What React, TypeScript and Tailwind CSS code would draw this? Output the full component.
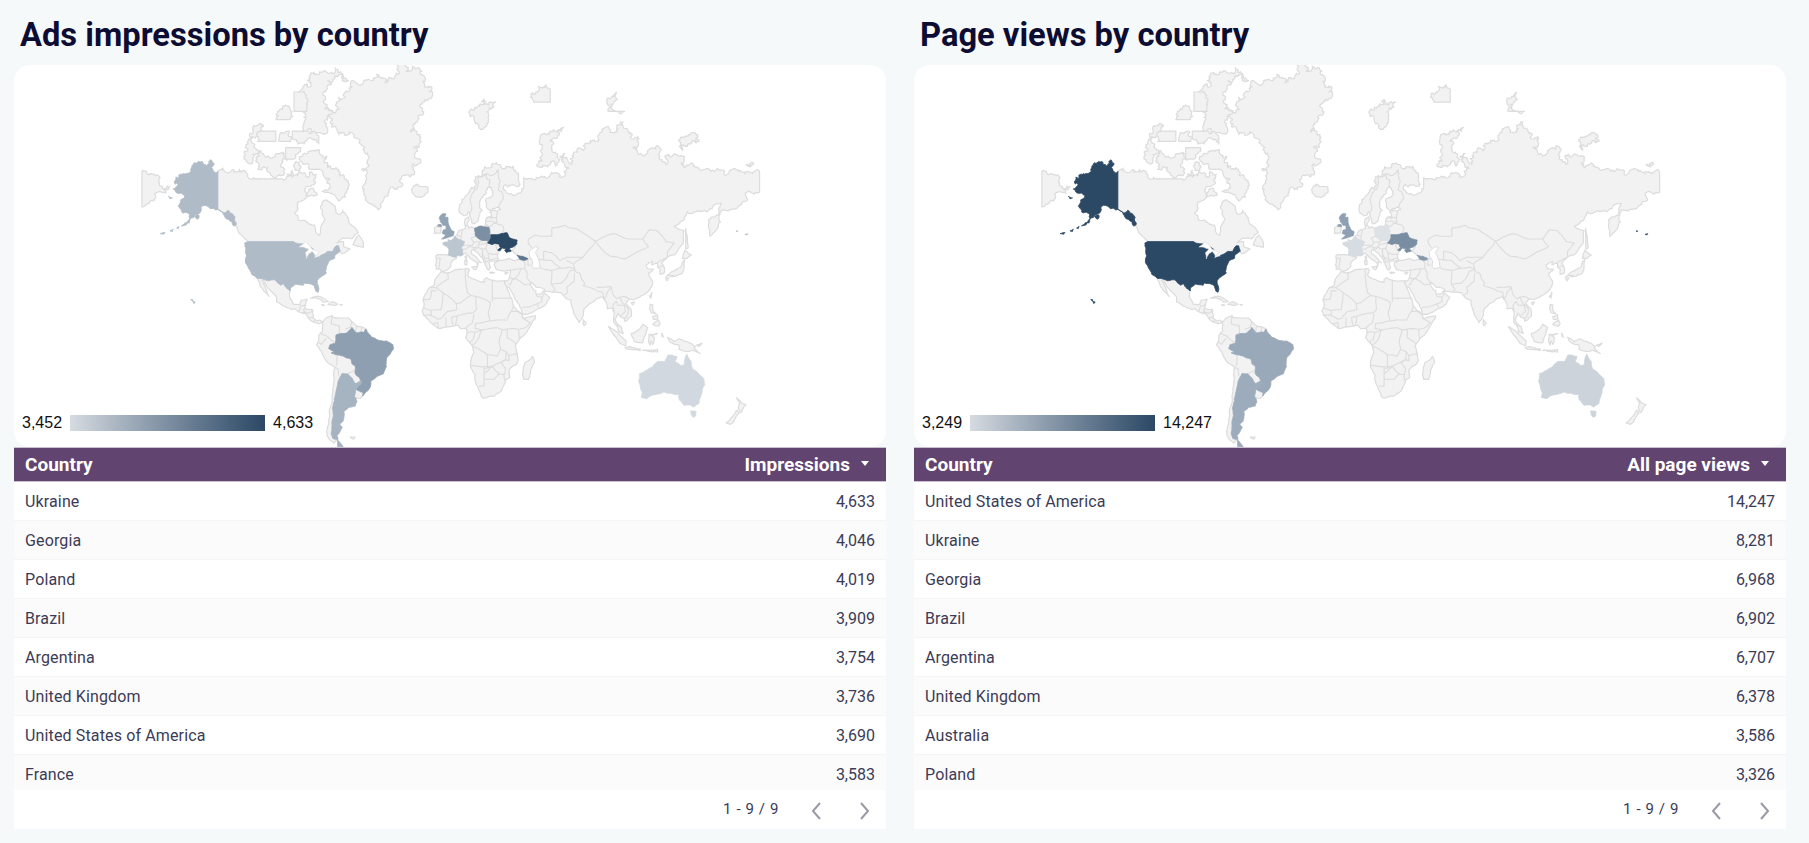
type Pt = [number, number];

const sx = (lon: number) => 437 + 1.653 * lon;
const sy = (lat: number) => 271 - 96 * Math.log(Math.tan(Math.PI / 4 + (lat * Math.PI) / 360));

const noise = (a: number, b: number) => {
  const s = Math.sin(a * 12.9898 + b * 78.233) * 43758.5453;
  return s - Math.floor(s) - 0.5;
};

// midpoint displacement, keyed on the segment so that neighbours sharing an edge get the same line
function wiggle(a: Pt, b: Pt, amp: number, out: Pt[]) {
  const [p, q] = a[0] < b[0] || (a[0] === b[0] && a[1] < b[1]) ? [a, b] : [b, a];
  const dx = q[0] - p[0];
  const dy = q[1] - p[1];
  const len = Math.hypot(dx, dy);
  if (len < 2) return;
  const midY = (p[1] + q[1]) / 2;
  const rough = midY < 125 ? amp * 5.5 : midY < 160 ? amp * 3 : amp;
  const off = noise(p[0] + q[0], p[1] + q[1]) * rough;
  const m: Pt = [(p[0] + q[0]) / 2 - dy * off, (p[1] + q[1]) / 2 + dx * off];
  wiggle(a, m, amp, out);
  out.push(m);
  wiggle(m, b, amp, out);
}

// "lon,lat lon,lat ..." -> svg path
const toPath = (src: string, closed = true, amp = 0.16) => {
  const raw = src
    .trim()
    .split(/\s+/)
    .map((p) => p.split(',').map(Number));
  const out: Pt[] = [];
  const n = raw.length;
  for (let i = 0; i < (closed ? n : n - 1); i++) {
    const [lon1, lat1] = raw[i];
    const [lon2, lat2] = raw[(i + 1) % n];
    const a: Pt = [sx(lon1), sy(lat1)];
    const b: Pt = [sx(lon2), sy(lat2)];
    out.push(a);
    // straight lines stay straight (49th parallel, Alaska border, map edge)
    if (lon1 !== lon2 && lat1 !== lat2) wiggle(a, b, amp, out);
  }
  if (!closed) out.push([sx(raw[n - 1][0]), sy(raw[n - 1][1])]);
  return out.map((p, i) => `${i ? 'L' : 'M'}${p[0].toFixed(1)} ${p[1].toFixed(1)}`).join('') + (closed ? 'Z' : '');
};

const LAND = [
  // Eurasia
  '-5.6,36 -6.4,36.8 -7.4,37.2 -8.9,37 -8.8,38.5 -9.5,38.8 -8.8,40.5 -8.9,42 -9.2,43 -8,43.7 -5.5,43.6 -1.8,43.4 -1.2,44.7 -1.1,46 -2.2,47 -4.7,47.9 -4.7,48.5 -3,48.8 -1.6,48.7 -1.7,49.7 -0.2,49.3 1.5,50.1 2.5,51 3.6,51.5 4.7,53 6.9,53.5 8.7,53.9 8.6,55 8.1,56 8.6,57.1 10.6,57.7 10.3,56 10,55 11,54 12.5,54.4 14.2,53.9 16.5,54.5 18.6,54.7 19.8,54.4 21,55.3 21,57 22.5,57.7 24.3,57.2 24.4,58.3 23.5,59.2 28,59.5 30,60 28.5,60.6 25,60.2 22.9,59.9 21.4,60.8 21.4,62 21.2,63 25.4,65.1 24.5,65.8 22,65.5 21.2,64.5 17.5,62.5 17.2,60.7 19,59.8 16.7,57.5 16,56.2 14.3,55.5 12.9,55.5 11.2,59 10.7,59.4 8.3,58.1 5.6,58.8 5,61 6.5,62.8 10.5,64.5 14,67.5 19,69.8 25.8,71.1 31,70.2 41,67.5 40,66.2 33,66.7 35,64.4 37.5,64 40.5,64.6 44,66 44,68.3 54,68.4 60,69 68,68.5 67,71.5 69,73 73,71 74,73 80,73.5 87,75 104,77.7 113,75.7 110,74 127,73.5 130,71 140,72.5 160,69.7 170,70 178,69 186.7,69.5 186.7,64.8 180,65 178,64.5 179,62.5 170,60 163.5,59.8 162,58 163,56 160,53 156.7,51 155.7,55 156,57 163.5,61.8 160,61.5 155,59.4 143,59.3 135,54.7 141,53 140.3,48 135,43.5 132,43 130.7,42.3 127.5,39.8 129.3,37 129,35.2 126.5,34.5 126.6,37 125,38 125,39.8 121.5,39 122,40.6 118,39 119,37.3 122.5,37 119.5,35 122,31 121.5,28.5 119,25.5 114,22.5 110.5,21.3 108,21.6 105.8,19 108.8,15.8 109.3,12 105.2,8.7 105,10.5 103,11 101,13.4 99.3,10 100.3,7.5 103,5.5 104.2,1.5 101.3,2.9 100.3,6 98.3,8.5 98.7,14 97.6,16.5 94.5,16 94.3,18.5 91.5,22.8 88,21.7 86.5,20 80.3,15.5 80,12 77.5,8 75,12 73,17.5 72.7,21 69,22.3 66.8,25 61.6,25.2 57.3,25.7 56.5,27 51.5,27.9 48.8,30.3 48,29.5 50.1,26.5 51.3,26 51.5,24.3 54,24.2 56.3,26.2 56.6,24.5 59.8,22.5 57.8,19 55,17 52,15.8 45,12.8 43.3,12.7 42.8,15 39,21 35,28 34.5,28 33,28.5 32.5,30 32.3,31.2 34.3,31.3 35.8,34.5 36,36.8 32.5,36.1 30.5,36.3 27.5,36.8 26.2,38.8 26.3,40 29,41 31.3,41.2 35,42 38,41 41.5,41.6 41.6,42.5 38,44.5 37,45.3 39,47.2 35,46.2 36.5,45.2 33.6,44.5 32.5,45.4 33.5,46.1 30.8,46.5 28.7,44.8 28,43 29,41.2 26.5,40.8 24,40.7 23,40.3 24,38 22.8,36.5 21.5,37.5 19.5,41.5 18.5,42.5 14.5,45.2 13.7,45.7 12.3,45.3 12.5,44 16,41.9 18.4,40 16.9,40.5 16,38 15.7,40 12.5,41.5 10.5,43 8.8,44.4 6,43.1 3.2,43 3.2,41.9 0.7,40.8 -0.3,39.4 0,38.7 -2,36.8',
  // Chukotka, wrapped to the left edge
  '-187,69.6 -177,67.5 -170,66.2 -172.5,64.5 -176,65 -180,62.5 -187,60.8',
  // Africa
  '32.5,30 32.3,31.2 30,31.2 25,31.6 21.5,32.9 20,32 20,30.5 15.5,31.5 11,33.2 10,34 11,37 9.8,37.3 3,36.8 -2,35.2 -5.4,35.9 -6,35.7 -9.7,31.5 -10,29 -13,27.8 -16,23.5 -17,21 -16.3,19 -17.5,14.7 -16.7,12.4 -13.5,9.5 -11,7 -7.5,4.4 -4,5.2 1,5.8 4.4,6.3 6,4.3 8.8,4.6 9.7,3.5 9.3,0 8.8,-1 11.8,-4.5 13.2,-6 13.8,-10 11.8,-16 11.7,-18 14.5,-22.5 15,-27 18.4,-33.9 20,-34.8 26,-33.8 30.5,-31 32.8,-27 32.8,-25.8 35.5,-24 35,-20 39,-17 40.7,-14.5 39.5,-8 38.8,-6 39.5,-4.5 41.5,-1.7 46,2.5 51,10.5 51.2,11.9 44,10.5 43.2,11.5 42.9,12.8 39.5,15.5 37.3,18.9 37,21 35.5,24 33.9,27.5',
  // North America
  '-168,65.6 -166.5,68.3 -163,69 -156.7,70.7 -141,69.6 -135,69.3 -128,70 -124,69.6 -115,68 -108,68 -102,68 -96,68.3 -94,71.5 -92,69.5 -88,68.5 -85.5,69.5 -81.5,69 -82,67 -86,66.2 -87.5,64.5 -93,62 -94.7,59 -92.5,57 -88,56.5 -82.5,55 -82,52.9 -79.5,51.3 -79,54 -77,56 -78,58.8 -77.5,62.4 -73.5,62.3 -70,61 -68.5,58.6 -65.5,59.8 -62,57.5 -60,55 -56,52.5 -60,50 -66,50.2 -69,48.5 -65,49 -65,47 -61,46 -64,44.5 -66,44 -67.5,44.9 -70,43.7 -70.5,42 -74,40.6 -75.5,38 -76,36 -75.5,35.2 -78,33.8 -81,31.5 -80,27 -80.5,25.2 -81.8,26 -83,29 -85,29.7 -89,30.2 -89.5,29 -94,29.6 -97.2,27.5 -97.5,22 -95.5,18.7 -91.5,18.5 -90.5,21 -87,21.5 -88,18 -88.6,16 -84,15.8 -83.3,12 -83.5,10.5 -81,8.9 -79.5,9.5 -77.4,8.6 -78.3,8 -80.5,7.3 -83,8.2 -85.7,10 -87.5,13 -91.5,14 -94.5,16.2 -96.5,15.7 -101.5,17.5 -105.5,20 -105.5,22.5 -109.5,26.5 -112.5,30 -113.2,31.5 -114.7,31.7 -112,27 -110,23 -112,25 -115,28 -117.1,32.5 -120.5,34.5 -122.5,37.5 -124.4,40.4 -124,46 -124.7,48.4 -122.5,48.5 -125,50.3 -128,52 -130.3,54.7 -133.5,57.5 -138,59 -140,59.8 -146,60.5 -151,61 -152,59 -154,58.5 -158.5,55.8 -163,54.8 -158,58.7 -162,59 -165,61 -161,64 -165,64.5',
  // South America
  '-77.4,8.6 -75.5,10.8 -72,12.2 -71.3,11 -68,10.7 -62,10.7 -60,8.5 -57,6 -52.5,4.8 -51,4 -50,1.5 -48,-0.7 -44,-2.5 -39,-3 -35.2,-5.2 -34.8,-7.5 -37,-11 -39,-13 -39.2,-18 -41,-22 -45,-23.5 -48.5,-26 -48.7,-28.5 -52,-32.2 -53.4,-33.7 -55,-34.9 -58.4,-34 -57,-36.5 -58,-38.5 -62,-39 -65,-41 -65.2,-45 -67.5,-46.5 -65.8,-47.8 -69,-51 -68.4,-52.4 -71,-53.7 -75,-51 -74,-45 -73.5,-40 -71.5,-32 -70.3,-18.5 -76,-14 -81.3,-5 -80,-2.5 -80,0.5 -78,2.5 -77.5,6.8 -77.9,7.5',
  // Greenland and the arctic islands
  '-73,78.2 -68,76 -58,75.5 -54,70 -51,69 -53.5,66 -50,62 -44,59.9 -41,62.5 -37,65.7 -30,68 -23,70 -22,72.5 -18,75 -20,78 -17,80 -12,81.5 -30,83.6 -45,82.5 -60,82 -68,80.5',
  '-61.5,66.5 -64,63.5 -68,62.5 -73,64.5 -78,65 -73,68 -79,70 -85,70 -89,71 -85,73.5 -80,73.7 -75,72.5 -68,70 -62,67',
  '-117,70 -105,68.7 -101,69.5 -105,73 -115,73.5 -118,71.5',
  '-125,72 -120,71.5 -116,73.5 -118,76 -124,74.5',
  '-90,76.5 -80,76.3 -76,78 -72,79 -62,82 -70,83 -85,82.5 -92,81 -88,78',
  '-96,75.5 -80,74.6 -80,75.8 -90,76.5 -96,76.5',
  '-100,72 -95,72 -91,74 -100,74',
  '-117,75 -106,75 -106,76.5 -116,76.5',
  '-95,79 -87,79 -90,81 -95,81',
  '-122,76 -118,75.7 -116,77.5 -120,77',
  '-104,75 -97,75 -98,76.5 -103,76.3',
  '-106,78 -98,78 -100,79.7 -105,79',
  '-99,69 -95,68.7 -96,69.8',
  '-87,63.7 -81,64 -83,65.5 -86,65.6',
  '-59.3,47.7 -53,46.7 -53,48.5 -55.7,51.5 -57.5,50.5',
  // North Atlantic and Europe
  '-24,65.5 -22,64 -18.5,63.4 -14,64.7 -15,66.2 -19,66.2 -22.5,66.4',
  '-10,52 -6.2,52.2 -6,54 -5.6,55 -8,55.2 -10,54',
  '12.5,38 15.6,38.2 15,36.7',
  '8.2,41 9.7,41 9.7,39.2 8.5,39',
  '8.6,43 9.5,43 9.4,41.5 8.8,41.6',
  '23.5,35.5 26.3,35.3 24,35',
  '32.3,35 34.5,35.6 33.5,34.6',
  // Russian arctic
  '11,79 20,80.3 27,80 18,76.7 15,77.5',
  '52,71 57,70.7 60,75 68,77 60,76.5 55,74.5',
  '48,80.5 60,81 60,80 50,80',
  '95,79 105,79 100,81',
  '138,75 145,76 150,75 140,73.5',
  '178.5,71 183,71.2 181,70.8',
  '142,54 143,50 143.5,46.5 142,46 142,50',
  // Caribbean
  '-85,22 -80,23 -75,20.5 -74.2,20.2 -77.5,19.9 -78,20.8 -82,22.3',
  '-74.5,18.4 -72,20 -68.5,18.6 -71,18',
  '-78.3,18.4 -76.3,18.2 -77.5,17.8',
  '-67.2,18.4 -65.7,18.4 -66.5,18',
  // Asia and Oceania
  '130.9,34 135,33.5 140,35 141,38 141.4,41.4 140,40.5 139,38 136.7,37 133,35.5',
  '140,42 141.5,45.5 145.3,43.4 143,42',
  '130,33.5 131.8,33 131,31.2 130,32',
  '132.5,33.7 134.5,34 134,33.3',
  '121.5,25.2 121,22 120,23',
  '109,19.5 111,19.8 110,18.3',
  '120.5,18.5 122.2,18.2 122,15.5 124,13 121,13.7 120,16',
  '122,7 125.5,9.5 126.5,7.5 125.5,5.8',
  '122,11.5 125,12.5 125,10 122.5,9.8',
  '109,1.5 111,2 113,3.2 116,7 119,5 117.8,1 116,-4 111,-3.3 109.3,0',
  '95.3,5.6 98,4 104,-1 106,-3 105.5,-5.8 102,-4 98.5,0.5',
  '105.2,-6.8 108,-6.3 114.5,-7.7 114.4,-8.7 106,-7.5',
  '119.8,1 125,1.5 121,0.3 123.2,-1 122,-5 121,-3 120.5,-5.5 119.5,-3.5',
  '131,-0.8 135,-3.3 138,-1.7 145,-4.3 147.8,-6 147,-7 150.8,-10.5 146,-8.5 143,-9.2 138,-8 138,-5.5 133,-4',
  '116,-8.5 120,-8.3 125,-8 125,-9.5 119,-9',
  '127.5,1.8 128.5,-0.8 127.5,0',
  '148.5,-5.5 152,-4.2 150,-6.2',
  '172.8,-34.5 175.5,-37 178.4,-37.7 175.3,-41.5 173.8,-39.5 174.7,-37',
  '172.7,-40.5 174.3,-41.7 171,-45.5 169,-46.6 166.5,-46',
  '49.3,-12 50.5,-15.5 47,-25 44,-25 43.5,-21 44.5,-16',
  '80,9.7 81.8,7.5 80.5,6 79.8,7.5',
  '-61,-51.5 -58,-51.5 -59,-52.3',
];

// inland water drawn on top of the land
const CASPIAN = '47,45 51,47 53,46.5 51,44.5 53,41.5 54,38 50,37.3 49,38.5 49.5,40.3 47.5,43';
const GREAT_LAKES = '-92,46.8 -88,48.8 -84.8,46.7 -84,45.9 -80,44.5 -82,43 -84,45 -86,44 -87.5,41.7 -88,44.5 -86,46 -89,46.7';

const BORDERS = [
  // Central America
  '-92,14.6 -91,17.8 -89,17.8 -88.3,18.5', '-89,15.9 -89.2,15 -88,14', '-90,13.7 -88,14 -86,13.5 -83.2,15', '-85.7,11 -83.6,11', '-82.9,8.2 -82.5,9.5',
  // South America
  '-72,12 -72.5,7.4 -67.5,6 -67.5,2 -69.5,0.6', '-60,8.5 -61,5.2 -64,4', '-57.2,6 -57.5,2', '-54,5.8 -54.5,2.3', '-78.8,1.4 -75.2,0 -70,-4.3', '-80.3,-3.4 -78.5,-5 -75.5,-1.5', '-69,-11 -69,-16 -69.6,-17.5', '-70.3,-18.5 -68.5,-19 -68,-23', '-62.5,-22 -58,-20',
  // Europe
  '-8.9,42 -6.5,42 -7,39.5 -7.4,37.2', '8.6,55 10,54.8', '3.4,51.4 6,51', '6.9,53.5 6,51 6.2,49.5', '14.2,53.9 14.7,52.5 15,51 12.2,50.3 13.8,48.7 13,47.5 9.6,47.5 7.5,47.6', '7,45.9 9,46 10.4,46.8 12.2,47 13.7,46.5 13.7,45.7', '13.8,48.7 17,48.8 17,47.8 16.2,46.8 13.7,46.5', '15,51 18.8,49.5 17,48.8', '17,47.8 18.8,48 22.2,48.4 21,46.3', '16.2,46.8 18.8,45.9 21,46.3 22.5,44.3 25,43.7 28.5,43.8', '26.6,48.3 28.2,45.5', '22.5,44.3 22.7,42.9 23,41.3 26.3,41.8 28,42', '20.5,40 23,41.3', '19,45.9 19.3,43.5 20.5,42 22.7,42.2', '13.7,45.5 16.2,46.5', '19,45 19,42.5', '19.5,42 20.5,42 20.8,40.2',
  '21,56.3 25,56.3 26.5,55.7 23,54.3', '21.5,57.5 24.3,57.8 27.5,57.5 28,56 26.5,55.7 31,55 32,53.5 31,52.1', '11.2,59 12.5,61 12,63.5 14.5,65.5 18,68.5 20.5,69', '24.2,65.8 23.5,67.8 20.5,69 25.7,68.9 28.5,69.9 29,66.8 31.5,62.9 27.8,60.5', '28,59.5 27.5,57.5', '19.8,54.4 22.8,54.4 21,55.3',
  // Middle East and Central Asia
  '41.5,41.6 43.5,41 44.8,39.7 44.5,37.2 42.2,37.2 36.7,36.6', '42.2,37.2 41,34.5 39,32.5 36.8,32.3 35.8,33', '39,32.5 44.5,29.2 48,29.5', '39,32.5 37,31.6 36,29.3 34.9,29.5', '44.8,37.2 46,35.5 46,33 48.5,30', '43,16.7 47,17 52,19 55,20 55,22.7 52,23 51.5,24.3', '52,19 53,16.7', '56,24.5 55.5,22.7', '46.5,41.8 48.5,41.8', '43.5,41 46.5,41.5 46.5,38.9 48,39',
  '54,37.5 61,36.5 61,35 60.7,31 60.7,29.5 63,27 61.6,25.2', '60.7,29.5 66.5,29.9 70,33 71.6,36 74.8,37', '61,36.5 65,37.3 71,37.9 74.8,37.3', '53,41.5 56,41.3 61,41 66.5,37.3', '56,41.3 56,45 61,44.5 66,41 70,42.5 80,42.5', '73.5,39.5 70,41', '49,46.4 47,48 46.5,49 47,50 51,51.5 55,51 61,51 61,54 69,55 71,54.2 77,53.5 83,51 87.3,49.2', '87.3,49.2 85.5,47 82.5,45 80,42.5 74,39.5 74.8,37.3 75,35.9 78,35 79,32 81,30',
  // South and East Asia
  '81,30 80,28.8 88,26.3', '88,28 92,27.9 97,28.3', '88,26 92,25 92.5,21', '97,28 94,24 92.5,21', '74.8,35 74.5,31 70,28 70.5,25 68.3,23.6', '97,28 98,24 100,22', '100,21.5 102,22.5 105,23 108,21.6', '102,22.5 104,19 107,16.5 107.5,14.5', '100,20.3 101,18 105,18 105.5,14.4 102.8,12', '107.5,14.5 106,11 104.5,10.4', '100,20.3 98,18 98.7,14', '100.3,6.5 102,6',
  '87.3,49.2 91,46 96,43 105,41.7 112,44.5 119.5,47 116,50', '87.3,49.2 92,50.7 98,52 102,51.3 107,50 116,50 120,53.4 125,53 130,49 135,48.4 131,45 131,43 130.7,42.3 128,41.5 124.5,40', '125,38 128.5,38.5',
  // Africa
  '-2,35.2 -1.5,32.3 -8.7,28 -8.7,27.3', '-13,27.7 -8.7,27.7', '-8.7,26 -12,26 -12,23.4 -13,21.3 -17,21', '-8.7,27.3 -4.8,25 -6,15.5 -12,15 -16.3,16.5', '-4.8,25 1.2,21 3.2,19 6,19.5 12,23.5', '8.6,36.9 9,30 10,25 12,23.5 15,23 24,19.5', '25,31.6 25,20', '25,22 37,22', '24,19.5 22.5,14 23.5,9', '15,23 15.5,16 13.5,13.7', '3.5,11.7 8,13 13.5,13.7', '3.2,19 3.5,15.5 0.2,14.8 -2,14.5 -5.5,10.5', '0.2,11 3.5,11.7', '14,13 13,8 8.8,4.6', '-3,5 -3,11', '1.2,6 0.5,11', '2.7,6.3 3.5,11.7', '-7.5,4.4 -8,8 -11,7', '-13,12.5 -8,10 -5.5,10.5', '-12,15 -12,12.5 -16.7,12.4',
  '23.5,9 28,9.5 34,9.5', '36.5,14.5 34,10', '36.5,14.5 38,18', '43,12.7 40,14.5 36.5,14.5', '43,11 48,8 45,5 41.5,4', '41.5,-1.7 41,4 36,4.5 34,4.2 34,-1 37.5,-3 39.5,-4.7', '34,4.2 31,3.7 28,5', '15,7.5 14.5,4.5 18.5,3.5 23,4.5 28,5', '15,7.5 23.5,9', '9.7,2.3 14.5,2.2 18.5,3.5 17,-1 14,-4.8 12,-5', '14.5,2.2 13.5,-2 11,-3.8', '31,3.7 29.5,-1 29,-4 30,-8', '12.5,-6 16.5,-7.5 22,-11 28,-12 30,-8', '22,-11 22,-18 11.8,-17.3', '22,-18 25,-17.8 20,-19 20,-28.5 17,-28.8', '25,-17.8 30,-15.7 33,-14 33.5,-9.5 30,-8', '33.5,-9.5 34.9,-11.5 40.4,-10.5', '34.9,-11.5 35,-14.5 33,-14 30.3,-15.5 33,-19 32,-23 32.8,-26', '20,-22 25,-17.8 29,-22 26,-25 20,-25', '29,-22 32,-22.4',
];

// highlighted countries, key -> outlines
const SHAPES: Record<string, string[]> = {
  usa: [
    '-124.7,48.4 -123,49 -95.2,49 -94.6,48.7 -89.5,48 -84.8,46.7 -82.5,45.3 -82.4,43 -83,42 -79,42.7 -79,43.3 -76.5,44 -74.7,45 -71.5,45 -69.5,47.3 -68,47.3 -67,45 -67.5,44.9 -70,43.7 -70.5,42 -74,40.6 -75.5,38 -76,36 -75.5,35.2 -78,33.8 -81,31.5 -80,27 -80.5,25.2 -81.8,26 -83,29 -85,29.7 -89,30.2 -89.5,29 -94,29.6 -97.2,27.5 -97.2,25.9 -99.5,27.5 -101.5,29.8 -103,29 -104.7,30 -106.5,31.8 -108.2,31.8 -111,31.3 -114.7,32.5 -117.1,32.5 -120.5,34.5 -122.5,37.5 -124.4,40.4 -124,46',
    '-168,65.6 -166.5,68.3 -163,69 -156.7,70.7 -141,69.6 -141,60.3 -137.5,58.9 -135,59.8 -131,56.6 -129.8,55.3 -131.5,54.7 -134.5,56.8 -138,59 -140,59.8 -146,60.5 -151,61 -152,59 -154,58.5 -158.5,55.8 -163,54.8 -158,58.7 -162,59 -165,61 -161,64 -165,64.5',
    '-171,63.7 -168.5,63.3 -170,63',
    '-155,57.9 -152.5,58.3 -153.5,57',
    '-166,54 -164.5,54.6 -165,53.8',
    '-170,53 -168,53.6 -168.5,52.8',
    '-176,52 -173,52.4 -174,51.8',
    '178,51.8 179.5,52 179,51.5',
    '172.5,53 173.5,53 173,52.7',
    '-156.3,20.3 -154.8,19.8 -155.6,18.9',
    '-157.4,21.4 -156,21 -156.6,20.5',
  ],
  ukraine: ['22.2,48.4 22.7,49.1 23.7,50.5 24,51.6 28,51.6 31,52.1 34,52.3 35.5,50.4 38,49.9 40,49.6 39.8,48 38.2,47.1 35,46.2 36.5,45.2 33.6,44.5 32.5,45.4 33.5,46.1 30.8,46.5 29.7,45.3 28.2,45.5 30,46.5 29,48 26.6,48.3 24.9,47.8'],
  georgia: ['40,43.4 43.5,42.9 46.5,41.8 45,41.2 43,41.3 41.5,41.6'],
  poland: ['14.2,53.9 16.5,54.5 18.6,54.7 19.8,54.4 23,54.3 23.6,52.6 23.7,50.5 22.7,49.1 19,49.4 15,51 14.7,52.5'],
  france: ['-1.8,43.4 -1.2,44.7 -1.1,46 -2.2,47 -4.7,47.9 -4.7,48.5 -3,48.8 -1.6,48.7 -1.7,49.7 -0.2,49.3 1.5,50.1 2.5,51 4.2,50 6.2,49.5 8.2,49 7.5,47.6 6,46.3 7,45.9 7,44.1 7.5,43.8 6,43.1 3.2,43 3.2,42.4 0.7,42.7'],
  uk: [
    '-5.7,50 -1,50.7 1.4,51.2 1.8,52.8 0.2,53.3 -1.3,55 -1.8,56 -1.8,57.6 -3.8,57.7 -3,58.7 -5.2,58.7 -7,57.5 -6.3,56 -4.9,55 -3,54.9 -3,53.4 -4.7,53.3 -5.2,52 -3,51.4',
    '-8,54.5 -5.6,54.5 -6,55.2 -7.5,55.2',
  ],
  brazil: ['-51.6,4.2 -50,1.5 -48,-0.7 -44,-2.5 -39,-3 -35.2,-5.2 -34.8,-7.5 -37,-11 -39,-13 -39.2,-18 -41,-22 -45,-23.5 -48.5,-26 -48.7,-28.5 -52,-32.2 -53.4,-33.7 -53.2,-32 -57.6,-30.2 -54,-27 -54.6,-25.6 -55.5,-24 -58,-22 -57.8,-18 -60,-16.3 -60.5,-13.7 -65.4,-11.8 -69.5,-11 -72.5,-10 -70.5,-9.5 -74,-7.5 -73,-5 -70,-4.3 -69.5,0.6 -67,1.5 -64,1.5 -60,5.2 -57.5,1.9 -54.5,2.3 -52.5,2.2'],
  argentina: [
    '-66,-21.9 -62.5,-22 -58,-27.3 -54.6,-25.6 -54,-27 -57.6,-30.2 -58.4,-34 -57,-36.5 -58,-38.5 -62,-39 -65,-41 -65.2,-45 -67.5,-46.5 -65.8,-47.8 -69,-51 -68.4,-52.4 -71.5,-52 -72.5,-50 -71.5,-44 -71.8,-39.5 -70.5,-36 -70,-33 -68.5,-27 -66.5,-23',
    '-68.6,-52.6 -65.2,-54.9 -68.6,-54.9',
  ],
  australia: [
    '114,-22 113.5,-26 115.7,-32 115,-34.4 118,-35 124,-33 129,-31.6 134,-32.6 137.7,-33 138,-35.5 141,-38.2 144.8,-38 147,-39 150,-37.3 151.3,-33.5 153.5,-28 153,-25 149,-21 146,-19 145.3,-15 142.6,-10.8 141.6,-13 141,-17 139,-17.5 135.5,-15 136.8,-12.2 131,-11.5 129.5,-15 125,-15 122,-18 117,-20.6',
    '144.7,-40.8 148.3,-41 148,-43 146.5,-43.6 145.4,-42.5',
  ],
};

type Panel = {
  title: string;
  metric: string;
  min: string;
  max: string;
  barWidth: string;
  colors: Record<string, string>;
  rows: [string, string][];
};

const PANELS: Panel[] = [
  {
    title: 'Ads impressions by country',
    metric: 'Impressions',
    min: '3,452',
    max: '4,633',
    barWidth: 'w-[195px]',
    colors: { usa: '#afbbc7', ukraine: '#2b4865', georgia: '#5c748d', poland: '#7c8fa3', france: '#bcc6d1', uk: '#92a3b5', brazil: '#8e9fb1', argentina: '#a6b3c1', australia: '#d2d8df' },
    rows: [
      ['Ukraine', '4,633'],
      ['Georgia', '4,046'],
      ['Poland', '4,019'],
      ['Brazil', '3,909'],
      ['Argentina', '3,754'],
      ['United Kingdom', '3,736'],
      ['United States of America', '3,690'],
      ['France', '3,583'],
    ],
  },
  {
    title: 'Page views by country',
    metric: 'All page views',
    min: '3,249',
    max: '14,247',
    barWidth: 'w-[185px]',
    colors: { usa: '#2b4865', ukraine: '#7a8ea3', georgia: '#8497ab', poland: '#dde2e7', france: '#d6dce2', uk: '#8ea0b2', brazil: '#9aa9b9', argentina: '#9dacbc', australia: '#ccd3da' },
    rows: [
      ['United States of America', '14,247'],
      ['Ukraine', '8,281'],
      ['Georgia', '6,968'],
      ['Brazil', '6,902'],
      ['Argentina', '6,707'],
      ['United Kingdom', '6,378'],
      ['Australia', '3,586'],
      ['Poland', '3,326'],
    ],
  },
];

function WorldMap({ colors }: { colors: Record<string, string> }) {
  return (
    <svg width="872" height="382" viewBox="0 0 872 382" className="block" strokeLinejoin="round">
      <g fill="#f2f2f2" stroke="#dcdcdc" strokeWidth="1.2">
        {LAND.map((p, i) => (
          <path key={i} d={toPath(p)} />
        ))}
      </g>
      <g fill="none" stroke="#dcdcdc" strokeWidth="1.1">
        {BORDERS.map((p, i) => (
          <path key={i} d={toPath(p, false, 0.1)} />
        ))}
      </g>
      <path d={toPath(CASPIAN)} fill="#ffffff" stroke="#dcdcdc" />
      {Object.entries(SHAPES).map(([key, outlines]) => (
        <g key={key} fill={colors[key]} stroke={colors[key]} strokeWidth="0.8">
          {outlines.map((p, i) => (
            <path key={i} d={toPath(p)} />
          ))}
        </g>
      ))}
      <path d={toPath(GREAT_LAKES)} fill="#ffffff" stroke="#dcdcdc" strokeWidth="0.6" />
    </svg>
  );
}

function Chevron({ left }: { left?: boolean }) {
  return (
    <svg width="10" height="18" viewBox="0 0 10 18" fill="none" stroke="#9a9aa6" strokeWidth="2">
      <path d={left ? 'M9 1 2 9l7 8' : 'M1 1l7 8-7 8'} />
    </svg>
  );
}

function CountryPanel({ panel }: { panel: Panel }) {
  return (
    <div className="w-[872px] shrink-0">
      <h2 className="h-[65px] pl-1.5 pt-[13px] text-[32.7px] leading-[44px] font-bold text-[#0d0d33]">{panel.title}</h2>

      <div className="relative h-[382px] overflow-hidden rounded-2xl bg-white">
        <WorldMap colors={panel.colors} />
        {/* Colour scale */}
        <div className="absolute left-2 top-[350px] flex h-4 items-center font-['Liberation_Sans',sans-serif] text-base text-[#111111]">
          <span>{panel.min}</span>
          <div className={`mx-2 h-4 ${panel.barWidth} bg-gradient-to-r from-[#d6dbe1] to-[#2b4865]`} />
          <span>{panel.max}</span>
        </div>
      </div>

      <div className="flex h-[35px] items-center justify-between border-y border-[#c9bfd0] bg-[#614470] pb-px pl-[11px] pr-[17px] text-[19px] font-bold text-white">
        <span className="pt-0.5">Country</span>
        <span className="flex items-center gap-[11px] pt-0.5">
          {panel.metric}
          <svg width="8" height="5" viewBox="0 0 8 5" className="mb-1">
            <path d="M0 0h8L4 5z" fill="#ffffff" />
          </svg>
        </span>
      </div>

      <div className="h-[308px] overflow-hidden text-base text-[#3b3b57]">
        {panel.rows.map(([country, value], i) => (
          <div
            key={country}
            className={`flex h-[39px] items-center justify-between border-b border-[#f5f5f5] pl-[11px] pr-[11px] pt-[2px] ${i % 2 ? 'bg-[#fbfbfb]' : 'bg-white'}`}
          >
            <span className="tracking-[0.14px]">{country}</span>
            <span>{value}</span>
          </div>
        ))}
      </div>

      <div className="flex h-[39px] items-center justify-end bg-white pr-4 text-[15px] text-[#3b3b57]">
        <span className="mr-[32px] tracking-[0.6px]">1 - 9 / 9</span>
        <div className="flex items-center gap-[39px] pt-0.5">
          <Chevron left />
          <Chevron />
        </div>
      </div>
    </div>
  );
}

export default function App() {
  return (
    <div className="flex h-[843px] gap-7 overflow-hidden bg-[#f6f9fa] pl-3.5 font-['Roboto',sans-serif]">
      {PANELS.map((p) => (
        <CountryPanel key={p.title} panel={p} />
      ))}
    </div>
  );
}
